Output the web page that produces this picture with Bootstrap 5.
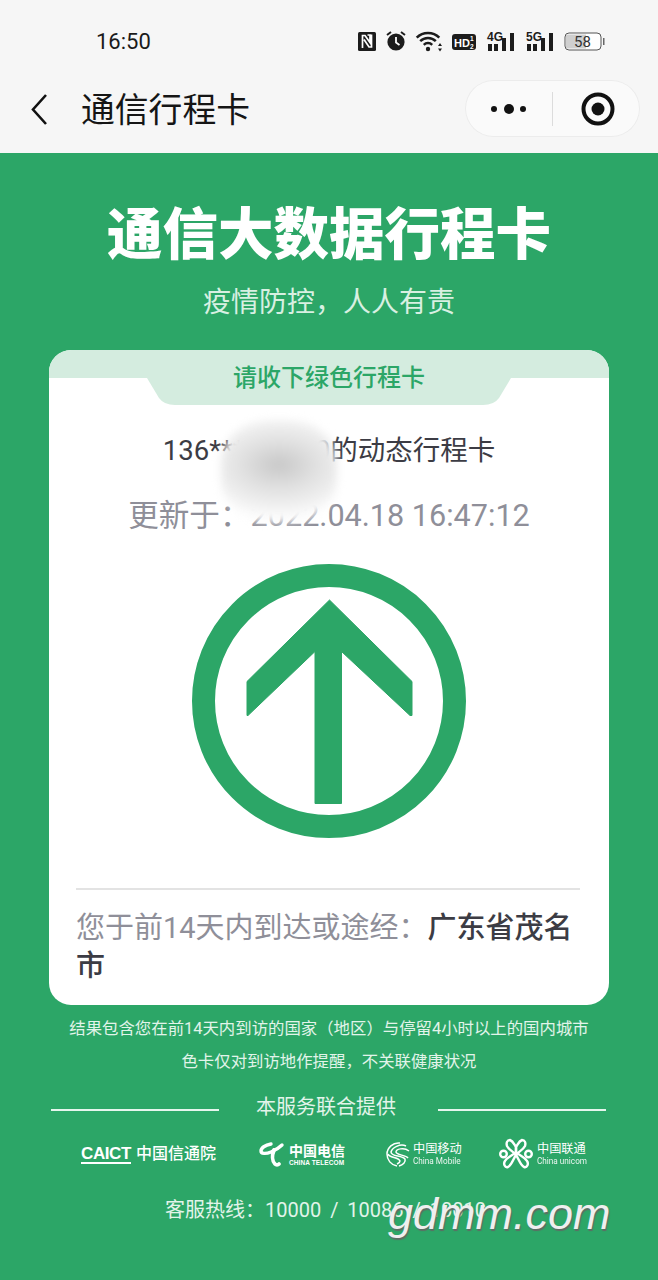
<!DOCTYPE html>
<html lang="zh-CN">
<head>
<meta charset="UTF-8">
<title>通信行程卡</title>
<link href="https://cdn.jsdelivr.net/npm/bootstrap@5.3.3/dist/css/bootstrap.min.css" rel="stylesheet">
<style>
    html, body { height: 1280px; overflow: hidden; }
    body { background: #2ca667; font-family: Roboto, "Noto Sans CJK SC", sans-serif; position: relative; }
    .top-area { background: #f6f6f6; height: 153px; }
    .status-row { height: 70px; padding: 12px 53px 0 96px; }
    .clock { font-size: 22px; line-height: 26px; padding-top: 2px; color: #1a1a1a; }
    .nav-row { height: 83px; padding: 10px 18px 0 31px; }
    .back-arrow { margin-top: 10px; }
    .page-title { font-size: 33.8px; line-height: 57px; padding-top: 2px; color: #151515; margin-left: 34px; }
    .capsule { width: 175px; height: 57px; box-shadow: inset 0 0 0 1px #ececec; border-radius: 29px; background: #fafafa; }
    .capsule-part { width: 87px; }
    .capsule-part-right { padding-left: 3px; }
    .capsule-line { width: 1px; height: 34px; background: #dcdcdc; }
    .big-title { font-size: 55.5px; line-height: 55px; font-weight: 900; color: #fff; padding-top: 55px; text-align: center; }
    .sub-title { font-size: 28px; line-height: 40px; color: #d8f0e2; margin-top: 20px; text-align: center; }
    .trip-card { margin: 27px 49px 0; background: #fff; border-radius: 22px; overflow: hidden; position: relative; padding-bottom: 20px; }
    .card-band { height: 28px; background: #d4ecdf; }
    .card-tab { width: 364px; height: 55px; margin: -28px auto 0; background: #d4ecdf; color: #2ca667; font-size: 24px; font-weight: 500;
        clip-path: path("M0 0 H364 V28 L352 48 Q347 55 336 55 H28 Q17 55 12 48 L0 28 Z"); }
    .phone-line { font-size: 27.5px; line-height: 40px; color: #3c3c44; margin-top: 26px; text-align: center; }
    .time-line { font-size: 30.6px; line-height: 40px; color: #8f8f99; margin-top: 25px; text-align: center; }
    .blur-blob { position: absolute; left: 172px; top: 70px; width: 116px; height: 102px; border-radius: 42%; filter: blur(4px);
        background: radial-gradient(ellipse 70% 50% at 50% 44%, #c8c8c8 0%, #e0e0e0 45%, #f2f2f2 85%, #fbfbfb 100%); }
    .arrow-box { margin-top: 28px; line-height: 0; text-align: center; }
    .card-rule { height: 2px; background: #e3e3e3; margin: 50px 29px 0 27px; }
    .place-text { font-size: 29px; line-height: 38px; color: #8f8f99; margin: 19px 27px 0; }
    .place-text strong { color: #3c3c44; font-weight: 500; }
    .note-text { font-size: 16.4px; line-height: 33px; color: #e2f4ea; margin-top: 7px; text-align: center; white-space: nowrap; }
    .provider-row { padding: 0 52px 0 51px; margin-top: 14px; height: 30px; font-size: 20px; line-height: 30px; color: #e2f4ea; }
    .provider-line { width: 168px; height: 2px; background: #e6f6ed; margin-top: 17px; }
    .provider-name { margin: 0 42px 0 37px; }
    .logo-row { padding-left: 81px; height: 34px; margin-top: 15px; color: #fff; }
    .logo-caict { width: 134px; flex: none; }
    .caict-mark { font-size: 17px; line-height: 17px; font-weight: 900; border-bottom: 2px solid #fff; letter-spacing: -.4px; font-family: "Liberation Sans", sans-serif; }
    .caict-name { font-size: 16px; font-weight: 500; margin-left: 5px; white-space: nowrap; }
    .logo-item { line-height: 1; flex: none; }
    .logo-tel { margin-left: 44px; width: 87px; gap: 4px; }
    .logo-mobile { margin-left: 40px; width: 74px; gap: 3px; }
    .logo-unicom { margin-left: 39px; width: 87px; gap: 4px; }
    .logo-cn { font-size: 12.2px; line-height: 14px; white-space: nowrap; }
    .logo-en { font-size: 8.2px; line-height: 11px; white-space: nowrap; opacity: .9; }
    .telecom-cn { font-size: 14px; line-height: 17px; font-weight: 700; font-family: "Noto Sans CJK SC", serif; white-space: nowrap; }
    .telecom-en { font-size: 6.5px; line-height: 8px; font-weight: 700; white-space: nowrap; font-family: "Liberation Sans", sans-serif; letter-spacing: .1px; }
    .hotline { font-size: 20px; line-height: 30px; color: #e2f4ea; margin-top: 24px; padding-left: 165px; word-spacing: 4px; white-space: nowrap; }
    .water-mark { position: absolute; left: 388px; top: 1187px; font-family: "Liberation Sans", sans-serif; font-style: italic; font-size: 45px; line-height: 54px;
        color: #efefef; text-shadow: 1px 2px 1px #5d6d64; white-space: nowrap; }
</style>
</head>
<body>
    <div class="top-area">
        <div class="status-row d-flex justify-content-between align-items-center">
            <span class="clock">16:50</span>
            <div class="d-flex gap-2 align-items-center">
                <svg width="20" height="24" viewBox="0 0 20 24"><rect x="0" y="3" width="18" height="19" rx="1.5" fill="#1c1c1c"/><path d="M4.500 19V6.500h2.500l5 7V6H9.500M13.500 5.500V18H11L6 10.500" fill="none" stroke="#fff" stroke-width="1.700"/></svg>
                <svg width="20" height="24" viewBox="0 0 20 24"><circle cx="10" cy="13" r="8.600" fill="#1c1c1c"/><path d="M10 8v5.500l3.500 2.500" fill="none" stroke="#fff" stroke-width="1.800"/><path d="M1 6l4-3M15 3l4 3" stroke="#1c1c1c" stroke-width="2"/></svg>
                <svg width="30" height="24" viewBox="0 0 30 24"><g fill="none" stroke="#1c1c1c" stroke-width="2.500"><path d="M2.700 8.700a16 16 0 0 1 22.600 0"/><path d="M6.200 12.200a11 11 0 0 1 15.600 0"/><path d="M9.800 15.800a6 6 0 0 1 8.400 0"/></g><circle cx="14" cy="20" r="2.200" fill="#1c1c1c"/><path d="M24 17h4l-2-3zM24 19.500h4l-2 3z" fill="#1c1c1c"/></svg>
                <svg width="26" height="24" viewBox="0 0 26 24"><rect x="0" y="5" width="24" height="16" rx="3" fill="#1c1c1c"/><text x="2" y="17.500" font-family="Liberation Sans" font-size="11" font-weight="700" fill="#fff">HD</text><text x="18" y="12" font-family="Liberation Sans" font-size="6.500" font-weight="700" fill="#fff">1</text><text x="18" y="19.500" font-family="Liberation Sans" font-size="6.500" font-weight="700" fill="#fff">2</text></svg>
                <svg width="31" height="24" viewBox="0 0 31 24"><text x="1" y="12" font-family="Liberation Sans" font-size="12" font-weight="700" fill="#1c1c1c">4G</text><g fill="#1c1c1c"><rect x="2" y="15" width="4" height="7"/><rect x="8" y="15" width="4" height="7"/><rect x="16" y="9" width="4" height="13"/><rect x="24" y="4" width="4" height="18"/></g></svg>
                <svg width="31" height="24" viewBox="0 0 31 24"><text x="1" y="12" font-family="Liberation Sans" font-size="12" font-weight="700" fill="#1c1c1c">5G</text><g fill="#1c1c1c"><rect x="2" y="15" width="4" height="7"/><rect x="8" y="15" width="4" height="7"/><rect x="16" y="9" width="4" height="13"/><rect x="24" y="4" width="4" height="18"/></g></svg>
                <svg width="41" height="24" viewBox="0 0 41 24"><rect x="1" y="4" width="36" height="17" rx="4" fill="#fff" stroke="#555" stroke-width="1"/><path d="M3 5.500h19v14H3a1.500 1.500 0 0 1-1-1.500V7a1.500 1.500 0 0 1 1-1.500z" fill="#cfcfcf"/><text x="10" y="18" font-family="Roboto" font-size="15" fill="#333">58</text><rect x="39" y="9" width="1.500" height="7" fill="#666"/></svg>
            </div>
        </div>
        <div class="nav-row d-flex align-items-start">
            <svg class="back-arrow" width="16" height="40" viewBox="0 0 16 40"><path d="M15 5L2 19.500 15 34" fill="none" stroke="#111" stroke-width="2.600"/></svg>
            <span class="page-title">通信行程卡</span>
            <div class="capsule ms-auto d-flex align-items-center">
                <div class="capsule-part d-flex justify-content-center">
                    <svg width="40" height="14" viewBox="0 0 40 14"><circle cx="5" cy="7" r="3" fill="#111"/><circle cx="20" cy="7" r="5" fill="#111"/><circle cx="34" cy="7" r="3" fill="#111"/></svg>
                </div>
                <div class="capsule-line"></div>
                <div class="capsule-part capsule-part-right d-flex justify-content-center">
                    <svg width="36" height="36" viewBox="0 0 36 36"><circle cx="18" cy="18" r="14.500" fill="none" stroke="#111" stroke-width="4"/><circle cx="18" cy="18" r="6.500" fill="#111"/></svg>
                </div>
            </div>
        </div>
    </div>

    <div class="big-title">通信大数据行程卡</div>
    <div class="sub-title">疫情防控，人人有责</div>

    <div class="trip-card">
        <div class="card-band"></div>
        <div class="card-tab d-flex align-items-center justify-content-center">请收下绿色行程卡</div>
        <div class="phone-line">136*****0000的动态行程卡</div>
        <div class="time-line">更新于：2022.04.18 16:47:12</div>
        <div class="blur-blob"></div>
        <div class="arrow-box">
            <svg width="274" height="274" viewBox="0 0 274 274">
                <circle cx="137" cy="137" r="125.500" fill="none" stroke="#2ca667" stroke-width="23"/>
                <path d="M137.500 36L220 117.500V151.500H218L149.500 87.500V239.500H123V87.500L56 151.500H55V117.500Z" fill="#2ca667" stroke="#2ca667" stroke-width="1" stroke-linejoin="round"/>
            </svg>
        </div>
        <div class="card-rule"></div>
        <div class="place-text">您于前14天内到达或途经：<strong>广东省茂名市</strong></div>
    </div>

    <div class="note-text">结果包含您在前14天内到访的国家（地区）与停留4小时以上的国内城市<br>色卡仅对到访地作提醒，不关联健康状况</div>

    <div class="provider-row d-flex">
        <div class="provider-line"></div>
        <span class="provider-name">本服务联合提供</span>
        <div class="provider-line"></div>
    </div>

    <div class="logo-row d-flex align-items-center">
        <div class="logo-caict d-flex align-items-center">
            <span class="caict-mark">CAICT</span><span class="caict-name">中国信通院</span>
        </div>
        <div class="logo-item logo-tel d-flex align-items-center">
            <svg class="flex-shrink-0" width="26" height="28" viewBox="0 0 26 28"><g fill="none" stroke="#fff" stroke-linecap="round"><path d="M12 4C6 5 2 8 2 11c0 3 5 3 10 1s8-4 11-7" stroke-width="3.400"/><path d="M15 10c-2 5-2 11 1 14 1 1 3 1 4 0" stroke-width="3.800"/></g></svg>
            <div>
                <div class="telecom-cn">中国电信</div>
                <div class="telecom-en">CHINA TELECOM</div>
            </div>
        </div>
        <div class="logo-item logo-mobile d-flex align-items-center">
            <svg class="flex-shrink-0" width="24" height="27" viewBox="0 0 24 27"><g fill="none" stroke="#fff" stroke-width="1.500"><path d="M14 2C7 1 1 7 1 13c0 6 4 11 10 12"/><path d="M20 5C14 2 6 7 5 11c0 5 11 3 14 7 1 3-2 6-6 7"/><path d="M23 10c-5-4-13-2-13 1 0 3 10 3 12 6"/><path d="M2 13c1 4 11 3 12 7 0 1-1 2-3 3"/></g></svg>
            <div>
                <div class="logo-cn">中国移动</div>
                <div class="logo-en">China Mobile</div>
            </div>
        </div>
        <div class="logo-item logo-unicom d-flex align-items-center">
            <svg class="flex-shrink-0" width="34" height="32" viewBox="0 0 34 32"><g fill="none" stroke="#fff" stroke-width="2.400"><circle cx="4.500" cy="16" r="3.300"/><circle cx="29.500" cy="16" r="3.300"/><path d="M17 9c-2-3-3-6-6-7-3 0-4 3-3 6 2 4 6 5 9 9 3 4 4 10 8 12 3 1 5-3 3-6-2-4-7-5-11-9z"/><path d="M17 9c2-3 3-6 6-7 3 0 4 3 3 6-2 4-6 5-9 9-3 4-4 10-8 12-3 1-5-3-3-6 2-4 7-5 11-9z"/></g></svg>
            <div>
                <div class="logo-cn">中国联通</div>
                <div class="logo-en">China unicom</div>
            </div>
        </div>
    </div>

    <div class="hotline">客服热线：10000 / 10086 / 10010</div>
    <div class="water-mark">gdmm.com</div>

    <script src="https://cdn.jsdelivr.net/npm/bootstrap@5.3.3/dist/js/bootstrap.bundle.min.js"></script>
</body>
</html>
